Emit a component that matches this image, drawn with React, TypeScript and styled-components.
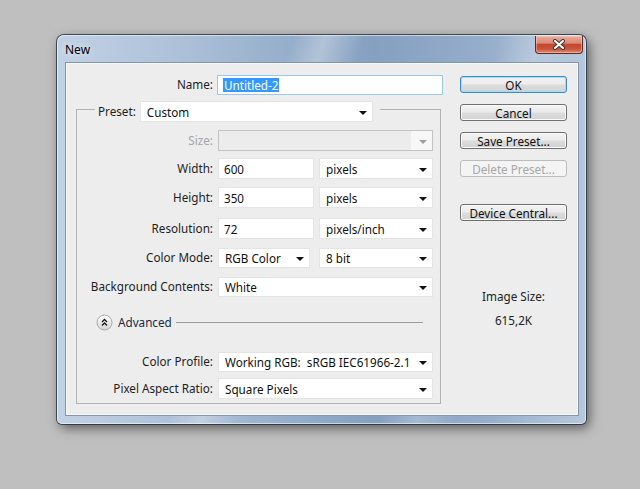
import React from 'react';
import styled, { createGlobalStyle } from 'styled-components';

const GlobalStyle = createGlobalStyle`
  html, body {
    margin: 0;
    padding: 0;
  }
  body {
    background: #bfbfbf;
    font-family: 'Noto Sans', 'Liberation Sans', sans-serif;
  }
`;

const Desktop = styled.div`
  width: 640px;
  height: 489px;
  box-sizing: border-box;
  padding: 35px 0 0 57px;
  background: #bfbfbf;
  overflow: hidden;
`;

const Window = styled.div`
  width: 529px;
  height: 389px;
  box-sizing: border-box;
  display: flex;
  flex-direction: column;
  padding: 0 7px 8px 8px;
  border-radius: 7px 7px 5px 5px;
  background:
    linear-gradient(108deg, rgba(255, 255, 255, 0) 36%, rgba(255, 255, 255, 0.3) 41%, rgba(255, 255, 255, 0) 47%,
      rgba(255, 255, 255, 0) 68%, rgba(255, 255, 255, 0.22) 74%, rgba(255, 255, 255, 0) 80%),
    linear-gradient(90deg, #c2d2e5 0%, #b0c3da 20%, #98b0cc 42%, #85a0c0 60%, #95adca 80%, #b6c8dd 100%);
  box-shadow:
    0 0 0 1px rgba(35, 45, 58, 0.8),
    inset 0 0 0 1px rgba(255, 255, 255, 0.55),
    3px 4px 12px rgba(0, 0, 0, 0.55);
`;

const TitleBar = styled.div`
  height: 27px;
  display: flex;
  align-items: flex-start;
  justify-content: space-between;
`;

const Title = styled.div`
  padding-top: 7px;
  font-size: 12px;
  line-height: 16px;
  color: #000;
  text-shadow: 0 0 6px rgba(255, 255, 255, 0.9);
`;

const CloseButton = styled.div`
  width: 48px;
  height: 18px;
  margin: 1px -4px 0 0;
  box-sizing: border-box;
  display: flex;
  align-items: center;
  justify-content: center;
  border: 1px solid #5e2a22;
  border-top: none;
  border-radius: 0 0 4px 4px;
  background: linear-gradient(#e8ab9c 0%, #d98a74 42%, #c3472f 50%, #c9533a 75%, #e08d70 100%);
  box-shadow: inset 0 0 0 1px rgba(255, 220, 210, 0.45);
`;

const Client = styled.div`
  flex: 1;
  display: flex;
  box-sizing: border-box;
  padding: 11px 11px 0 0;
  background: #ededed;
  border: 1px solid #8296b0;
  box-shadow: inset 0 0 0 1px #f7f7f7;
  color: #222;
  font-size: 11.7px;
`;

const FormColumn = styled.div`
  width: 377px;
  display: flex;
  flex-direction: column;
`;

const NameRow = styled.div`
  display: grid;
  grid-template-columns: 147px auto;
  column-gap: 4px;
  align-items: center;
`;

const Label = styled.div<{ $disabled?: boolean }>`
  text-align: right;
  line-height: 21px;
  white-space: nowrap;
  color: ${p => (p.$disabled ? '#a6a6a6' : '#1e1e1e')};
`;

const TextBox = styled.div<{ $w: number; $h?: number; $focus?: boolean }>`
  width: ${p => p.$w}px;
  height: ${p => p.$h ?? 21}px;
  box-sizing: border-box;
  display: flex;
  align-items: center;
  padding-left: 5px;
  background: #fff;
  border: 1px solid ${p => (p.$focus ? '#9cc8ec' : '#e4e4e4')};
  color: #111;
  white-space: nowrap;
`;

const Selected = styled.span`
  background: #3399ff;
  color: #fff;
  padding: 0 1px;
  line-height: 14px;
`;

const Dropdown = styled.div<{ $w: number; $h?: number; $disabled?: boolean }>`
  width: ${p => p.$w}px;
  height: ${p => p.$h ?? 21}px;
  box-sizing: border-box;
  display: flex;
  align-items: center;
  justify-content: space-between;
  padding: 0 5px 0 6px;
  background: ${p => (p.$disabled ? 'linear-gradient(90deg, #ececec 90%, #f7f7f7 90%)' : '#fff')};
  border: 1px solid ${p => (p.$disabled ? '#c3c3c3' : '#e4e4e4')};
  color: #111;
  white-space: pre;
`;

const Caret = styled.span<{ $disabled?: boolean }>`
  width: 0;
  height: 0;
  margin-top: 2px;
  border-left: 4px solid transparent;
  border-right: 4px solid transparent;
  border-top: 4px solid ${p => (p.$disabled ? '#a0a0a0' : '#111')};
`;

const Group = styled.fieldset`
  margin: 6px 0 0 10px;
  padding: 13px 0 4px 0;
  width: 365px;
  box-sizing: border-box;
  min-width: 0;
  border: 1px solid #b2b2b2;
  display: flex;
  flex-direction: column;
`;

const GroupHead = styled.legend`
  display: flex;
  align-items: flex-start;
  gap: 4px;
  height: 16px;
  margin-left: 18px;
  padding: 0 7px 0 3px;
`;

const Row = styled.div<{ $top?: number; $h?: number }>`
  display: grid;
  grid-template-columns: 136px 215px;
  column-gap: 5px;
  align-items: center;
  margin-top: ${p => p.$top ?? 0}px;
  height: ${p => p.$h ?? 21}px;
`;

const Pair = styled.div`
  display: flex;
  justify-content: space-between;
`;

const AdvancedRow = styled.div`
  display: flex;
  align-items: center;
  height: 20px;
  margin-top: 16px;
  padding: 0 17px 0 19px;
`;

const AdvancedText = styled.span`
  margin-left: 5px;
  color: #1b2a48;
`;

const Rule = styled.div`
  flex: 1;
  height: 1px;
  margin-left: 4px;
  background: #9d9d9d;
`;

const SideColumn = styled.div`
  width: 107px;
  margin-left: 17px;
  padding-top: 2px;
  display: flex;
  flex-direction: column;
  align-items: center;
`;

const Button = styled.button<{ $primary?: boolean; $top?: number }>`
  width: 107px;
  height: 17px;
  margin-top: ${p => p.$top ?? 0}px;
  padding: 0;
  box-sizing: border-box;
  font-family: 'Noto Sans', 'Liberation Sans', sans-serif;
  font-size: 11.7px;
  line-height: 14px;
  color: #111;
  border: 1px solid ${p => (p.$primary ? '#3d8ccb' : '#707070')};
  border-radius: 3px;
  background: linear-gradient(#f3f3f3 0%, #ebebeb 48%, #dddddd 52%, #d2d2d2 100%);
  box-shadow: inset 0 0 0 1px ${p => (p.$primary ? '#9fdcf8' : '#fbfbfb')};

  &:disabled {
    color: #a6a6a6;
    border-color: #bcbcbc;
    background: #f4f4f4;
    box-shadow: none;
  }
`;

const InfoText = styled.div<{ $top: number }>`
  margin-top: ${p => p.$top}px;
  line-height: 18px;
  color: #222;
  text-align: center;
`;

const CloseGlyph = () => (
  <svg width="14" height="11" viewBox="0 0 14 11">
    <path d="M3 2 L11 9 M11 2 L3 9" stroke="#3c2a28" strokeWidth="4" strokeLinecap="round" />
    <path d="M3 2 L11 9 M11 2 L3 9" stroke="#fff" strokeWidth="2.2" strokeLinecap="round" />
  </svg>
);

const AdvancedIcon = () => (
  <svg width="17" height="17" viewBox="0 0 17 17">
    <defs>
      <linearGradient id="advBg" x1="0" y1="0" x2="0" y2="1">
        <stop offset="0" stopColor="#ffffff" />
        <stop offset="1" stopColor="#d4d4d4" />
      </linearGradient>
    </defs>
    <circle cx="8.5" cy="8.5" r="7.5" fill="url(#advBg)" stroke="#a8a8a8" />
    <path d="M6 8 L8.5 5.5 L11 8 M6 11.5 L8.5 9 L11 11.5" fill="none" stroke="#1a1a1a" strokeWidth="1.3" />
  </svg>
);

const Select = ({ value, w, h, disabled }: { value: string; w: number; h?: number; disabled?: boolean }) => (
  <Dropdown $w={w} $h={h} $disabled={disabled}>
    <span>{value}</span>
    <Caret $disabled={disabled} />
  </Dropdown>
);

export default function App() {
  return (
    <Desktop>
      <GlobalStyle />
      <Window>
        <TitleBar>
          <Title>New</Title>
          <CloseButton>
            <CloseGlyph />
          </CloseButton>
        </TitleBar>
        <Client>
          <FormColumn>
            <NameRow>
              <Label>Name:</Label>
              <TextBox $w={226} $h={20} $focus>
                <Selected>Untitled-2</Selected>
              </TextBox>
            </NameRow>
            <Group>
              <GroupHead>
                <Label>Preset:</Label>
                <Select value="Custom" w={233} />
              </GroupHead>
              <Row>
                <Label $disabled>Size:</Label>
                <Select value="" w={215} disabled />
              </Row>
              <Row $top={7}>
                <Label>Width:</Label>
                <Pair>
                  <TextBox $w={96}>600</TextBox>
                  <Select value="pixels" w={114} />
                </Pair>
              </Row>
              <Row $top={8}>
                <Label>Height:</Label>
                <Pair>
                  <TextBox $w={96}>350</TextBox>
                  <Select value="pixels" w={114} />
                </Pair>
              </Row>
              <Row $top={10}>
                <Label>Resolution:</Label>
                <Pair>
                  <TextBox $w={96}>72</TextBox>
                  <Select value="pixels/inch" w={114} />
                </Pair>
              </Row>
              <Row $top={8} $h={20}>
                <Label>Color Mode:</Label>
                <Pair>
                  <Select value="RGB Color" w={92} h={20} />
                  <Select value="8 bit" w={114} h={20} />
                </Pair>
              </Row>
              <Row $top={9} $h={20}>
                <Label>Background Contents:</Label>
                <Select value="White" w={215} h={20} />
              </Row>
              <AdvancedRow>
                <AdvancedIcon />
                <AdvancedText>Advanced</AdvancedText>
                <Rule />
              </AdvancedRow>
              <Row $top={19} $h={20}>
                <Label>Color Profile:</Label>
                <Select value="Working RGB:  sRGB IEC61966-2.1" w={215} h={20} />
              </Row>
              <Row $top={7}>
                <Label>Pixel Aspect Ratio:</Label>
                <Select value="Square Pixels" w={215} />
              </Row>
            </Group>
          </FormColumn>
          <SideColumn>
            <Button $primary>OK</Button>
            <Button $top={11}>Cancel</Button>
            <Button $top={11}>Save Preset...</Button>
            <Button $top={11} disabled>
              Delete Preset...
            </Button>
            <Button $top={27}>Device Central...</Button>
            <InfoText $top={66}>Image Size:</InfoText>
            <InfoText $top={6}>615,2K</InfoText>
          </SideColumn>
        </Client>
      </Window>
    </Desktop>
  );
}
